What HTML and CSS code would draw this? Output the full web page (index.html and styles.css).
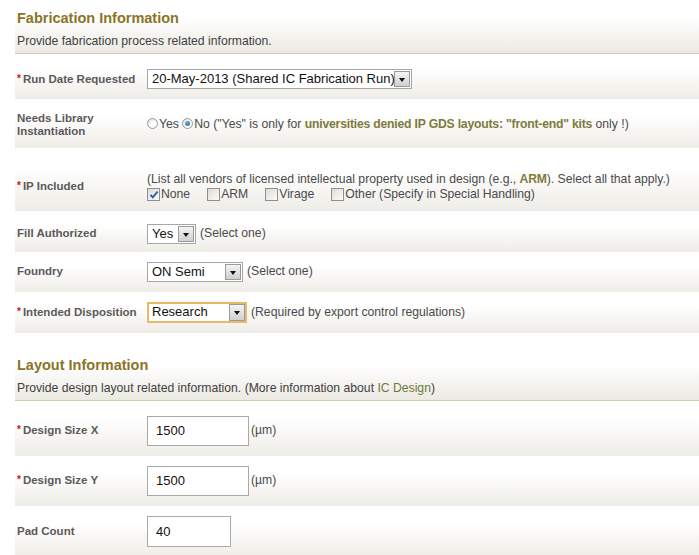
FILE: index.html
```html
<!DOCTYPE html>
<html>
<head>
<meta charset="utf-8">
<link rel="stylesheet" href="styles.css">
</head>
<body>
<div class="page">
  <section class="sec">
    <div class="sec-head">
      <h2>Fabrication Information</h2>
      <p>Provide fabrication process related information.</p>
    </div>
    <div class="row r-run">
      <div class="lbl"><span class="req">*</span>Run Date Requested</div>
      <div class="fld"><span class="sel w-run"><span class="sel-val">20-May-2013 (Shared IC Fabrication Run)</span><span class="sel-btn"></span></span></div>
    </div>
    <div class="row r-lib">
      <div class="lbl lbl-wrap">Needs Library Instantiation</div>
      <div class="fld txt"><span class="radio"></span>Yes <span class="radio on"></span>No ("Yes" is only for <b class="lnk">universities denied IP GDS layouts: "front-end" kits</b> only !)</div>
    </div>
    <div class="row r-ip">
      <div class="lbl"><span class="req">*</span>IP Included</div>
      <div class="fld txt">
        <div>(List all vendors of licensed intellectual property used in design (e.g., <b class="lnk">ARM</b>). Select all that apply.)</div>
        <div class="opts"><span class="opt"><span class="cb on"><svg viewBox="0 0 12 12" width="12" height="12"><path d="M2.5 5.8 L4.8 8.3 L9.6 2.6" fill="none" stroke="#2a5db0" stroke-width="1.9"/></svg></span>None</span><span class="opt"><span class="cb"></span>ARM</span><span class="opt"><span class="cb"></span>Virage</span><span class="opt"><span class="cb"></span>Other (Specify in Special Handling)</span></div>
      </div>
    </div>
    <div class="row r-fill">
      <div class="lbl">Fill Authorized</div>
      <div class="fld txt"><span class="sel w-fill"><span class="sel-val">Yes</span><span class="sel-btn"></span></span><span class="note">(Select one)</span></div>
    </div>
    <div class="row r-foundry">
      <div class="lbl">Foundry</div>
      <div class="fld txt"><span class="sel w-foundry"><span class="sel-val">ON Semi</span><span class="sel-btn"></span></span><span class="note">(Select one)</span></div>
    </div>
    <div class="row r-disp">
      <div class="lbl"><span class="req">*</span>Intended Disposition</div>
      <div class="fld txt"><span class="sel w-disp focus"><span class="sel-val">Research</span><span class="sel-btn"></span></span><span class="note">(Required by export control regulations)</span></div>
    </div>
  </section>

  <section class="sec sec2">
    <div class="sec-head">
      <h2>Layout Information</h2>
      <p>Provide design layout related information. (More information about <span class="lnk2">IC Design</span>)</p>
    </div>
    <div class="row r-x">
      <div class="lbl"><span class="req">*</span>Design Size X</div>
      <div class="fld txt"><span class="inp w-size">1500</span><span class="unit">(µm)</span></div>
    </div>
    <div class="row r-y">
      <div class="lbl"><span class="req">*</span>Design Size Y</div>
      <div class="fld txt"><span class="inp w-size">1500</span><span class="unit">(µm)</span></div>
    </div>
    <div class="row r-pad">
      <div class="lbl">Pad Count</div>
      <div class="fld txt"><span class="inp w-pad">40</span></div>
    </div>
  </section>
</div>
</body>
</html>
```

FILE: styles.css
```css
html, body { margin: 0; padding: 0; background: #fff; }
body {
  font-family: "Liberation Sans", Arial, sans-serif;
  color: #4a4a4a;
  font-size: 12px;
  overflow: hidden;
}
.page { padding-left: 15px; }

.sec-head {
  box-sizing: border-box;
  height: 54px;
  padding: 9px 0 0 2px;
  background: linear-gradient(#fff 35%, #ebe9e2);
  border-bottom: 1px solid #d3cbb1;
}
.sec-head h2 {
  margin: 0;
  font-size: 14.5px;
  line-height: 18px;
  font-weight: bold;
  color: #8a7427;
}
.sec-head p {
  margin: 6px 0 0;
  font-size: 12.2px;
  line-height: 16px;
  color: #3f3f3f;
}
.sec2 { margin-top: 14px; }

.row {
  box-sizing: border-box;
  display: grid;
  grid-template-columns: 132px 1fr;
  align-items: center;
  margin-top: 2px;
  background: linear-gradient(#fff 30%, #eeece6);
}
.sec-head + .row { margin-top: 1px; }
.r-run { height: 44px; padding-top: 4px; }
.r-lib { height: 47px; }
.r-ip { height: 61px; padding-top: 12px; }
.r-fill { height: 39px; padding-top: 2px; }
.r-foundry { height: 38px; padding-bottom: 3px; }
.r-disp { height: 39px; padding-bottom: 3px; }
.r-x { height: 54px; padding-top: 3px; }
.r-y { height: 48px; padding-bottom: 3px; }
.r-pad { height: 50px; padding-bottom: 4px; }

.lbl {
  padding-left: 2px;
  font-size: 11.5px;
  line-height: 13px;
  font-weight: bold;
  color: #5a5a5a;
  white-space: nowrap;
}
.lbl-wrap { white-space: normal; padding-right: 20px; }
.req {
  color: #c8102e;
  font-size: 10px;
  margin-right: 2px;
  position: relative;
  top: -1px;
}
.txt {
  font-size: 12.2px;
  line-height: 15px;
  color: #4a4a4a;
}
.lnk { color: #7f7a3e; font-weight: bold; letter-spacing: -0.2px; }
.lnk2 { color: #6e7a3a; }

/* select replica */
.sel {
  box-sizing: border-box;
  display: inline-flex;
  align-items: stretch;
  height: 20px;
  border: 1px solid #a7a7a7;
  background: #fff;
  vertical-align: middle;
  padding: 1px;
}
.sel-val {
  flex: 1;
  font-size: 13px;
  line-height: 16px;
  color: #111;
  padding-left: 3px;
  white-space: nowrap;
  overflow: hidden;
}
.sel-btn {
  box-sizing: border-box;
  width: 16px;
  border: 1px solid #9a9a9a;
  background: linear-gradient(#f4f4f4, #cfcfcf);
  position: relative;
}
.sel-btn::after {
  content: "";
  position: absolute;
  left: 4px;
  top: 6px;
  border-left: 3.5px solid transparent;
  border-right: 3.5px solid transparent;
  border-top: 4px solid #111;
}
.w-run { width: 265px; }
.w-fill { width: 49px; }
.w-foundry { width: 96px; }
.w-disp { width: 100px; height: 21px; }
.sel.focus { border: 2px solid #e9b96a; padding: 0; }
.note { margin-left: 4px; vertical-align: middle; }

/* radios and checkboxes */
.radio {
  box-sizing: border-box;
  display: inline-block;
  width: 11px;
  height: 11px;
  border-radius: 50%;
  border: 1px solid #9a9a9a;
  background: radial-gradient(circle at 60% 65%, #ffffff 30%, #d6d6d6);
  vertical-align: -1px;
  margin-right: 1px;
  position: relative;
}
.radio.on::after {
  content: "";
  position: absolute;
  left: 2px; top: 2px;
  width: 5px; height: 5px;
  border-radius: 50%;
  background: radial-gradient(circle at 35% 35%, #6fb6e0, #1d5a86);
}
.opts { display: flex; margin-top: 0; }
.opt { display: inline-flex; align-items: center; margin-right: 17px; }
.cb {
  box-sizing: border-box;
  display: inline-block;
  width: 13px;
  height: 13px;
  border: 1px solid #8f8f8f;
  background: linear-gradient(135deg, #dcdcd6, #fbfbfb);
  margin-right: 1px;
  position: relative;
}
.cb svg { position: absolute; left: 0; top: 0; }

/* inputs */
.inp {
  box-sizing: border-box;
  display: inline-block;
  border: 1px solid #a9a9a9;
  background: #fff;
  font-size: 13px;
  color: #111;
  padding-left: 8px;
  vertical-align: middle;
}
.w-size { width: 102px; height: 30px; line-height: 28px; }
.w-pad { width: 84px; height: 31px; line-height: 29px; }
.unit { margin-left: 2px; vertical-align: middle; }
```
